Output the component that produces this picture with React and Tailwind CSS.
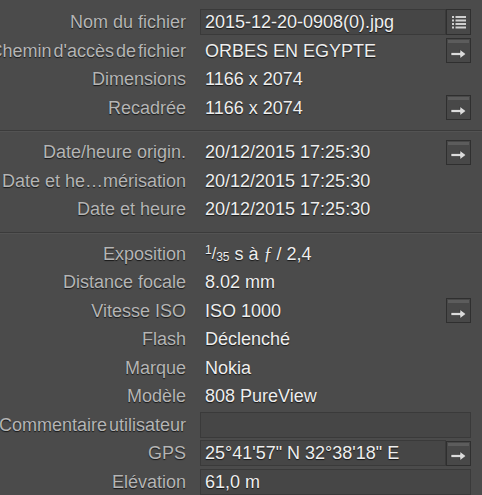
import React from "react";

const ListIcon = () => (
  <svg width="16" height="15" viewBox="0 0 16 15">
    {[2, 5.5, 9, 12.5].map((y) => (
      <g key={y}>
        <rect x="1" y={y - 1} width="2" height="2" fill="#d0d0d0" />
        <rect x="4.5" y={y - 1} width="10.5" height="2" fill="#d0d0d0" />
      </g>
    ))}
  </svg>
);

const ArrowIcon = () => (
  <svg width="17" height="10" viewBox="0 0 17 10">
    <path d="M1 3.5 H10 V0.5 L16 5 L10 9.5 V6.5 H1 Z" fill="#dcdcdc" stroke="#2f2f2f" strokeWidth="0.6" />
  </svg>
);

const Btn = ({ kind }) =>
  kind === "list" ? (
    <div className="w-[25px] h-[26px] shrink-0 border border-[#2f2f2f] bg-[#484848] flex items-center justify-center">
      <ListIcon />
    </div>
  ) : (
    <div className="w-[25px] h-[25px] shrink-0 border border-[#2f2f2f] bg-[#484848] flex flex-col">
      <div className="h-[3px] mx-[1px] mt-[1px] bg-[#5c5c5c]" />
      <div className="flex-1 flex items-center justify-center pt-[2px]">
        <ArrowIcon />
      </div>
    </div>
  );

const Row = ({ label, value, boxed, btn, labelClass = "" }) => (
  <div className="flex items-center h-[28.5px]">
    <div className="w-[186px] shrink-0 flex justify-end">
      <span className={`whitespace-nowrap text-[#b5b5b5] ${labelClass}`}>{label}</span>
    </div>
    <div className="ml-[14px] mr-[11px] flex-1 flex items-center h-[26px]">
      <div
        className={`flex-1 h-full flex items-center px-[4px] border whitespace-nowrap text-[#eeeeee] ${
          boxed ? "border-[#3a3a3a] bg-[#464646]" : "border-transparent"
        }`}
      >
        {value}
      </div>
      {btn && <Btn kind={btn} />}
    </div>
  </div>
);

const Sep = () => (
  <div className="mt-[8px] mb-[6px] h-[2px] border-t border-[#3b3b3b] border-b border-b-[#535353]" />
);

export default function App() {
  const dt = "20/12/2015 17:25:30";
  return (
    <div
      className="w-[482px] h-[495px] overflow-hidden bg-[#4b4b4b] pt-[8px] text-[18px] leading-none [text-shadow:0_1px_1px_rgba(0,0,0,0.7)]"
      style={{ fontFamily: '"Liberation Sans", Arial, sans-serif' }}
    >
      <Row label="Nom du fichier" value="2015-12-20-0908(0).jpg" boxed btn="list" />
      <Row label="Chemin d'accès de fichier" value="ORBES EN EGYPTE" btn="arrow" labelClass="[word-spacing:-3px]" />
      <Row label="Dimensions" value="1166 x 2074" />
      <Row label="Recadrée" value="1166 x 2074" btn="arrow" />
      <Sep />
      <Row label="Date/heure origin." value={dt} btn="arrow" />
      <Row label="Date et he…mérisation" value={dt} />
      <Row label="Date et heure" value={dt} />
      <Sep />
      <Row
        label="Exposition"
        value={
          <span className="flex items-center">
            <span className="relative -top-[4px] text-[12px]">1</span>
            <span className="text-[16px]">/</span>
            <span className="relative top-[3px] text-[12px]">35</span>
            <span className="ml-[5px]">s à </span>
            <span className="italic ml-[5px] font-['Liberation_Serif']">ƒ</span>
            <span className="ml-[4px]">/ 2,4</span>
          </span>
        }
      />
      <Row label="Distance focale" value="8.02 mm" />
      <Row label="Vitesse ISO" value="ISO 1000" btn="arrow" />
      <Row label="Flash" value="Déclenché" />
      <Row label="Marque" value="Nokia" />
      <Row label="Modèle" value="808 PureView" />
      <Row label="Commentaire utilisateur" value="" boxed labelClass="[word-spacing:-3px]" />
      <Row label="GPS" value={"25°41'57\" N 32°38'18\" E"} boxed btn="arrow" />
      <Row label="Elévation" value="61,0 m" boxed />
    </div>
  );
}
